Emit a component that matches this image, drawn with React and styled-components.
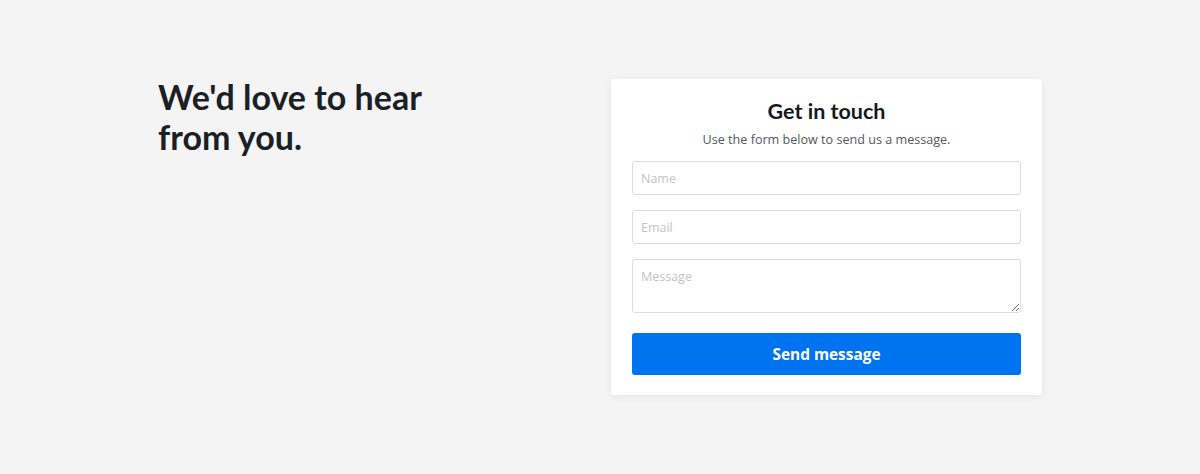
import React from "react";
import styled, { createGlobalStyle } from "styled-components";

const Global = createGlobalStyle`
  html, body { margin: 0; padding: 0; background: #f4f4f4; }
  body { font-family: "Open Sans", "Noto Sans", sans-serif; }
  * { box-sizing: border-box; }
`;

const Page = styled.div`
  min-height: 474px;
  padding-top: 79px;
`;

const Container = styled.div`
  width: 884px;
  margin: 0 auto;
  display: flex;
  justify-content: space-between;
  align-items: flex-start;
`;

const Heading = styled.h1`
  margin: -2px 0 0;
  font-family: "Lato", "Noto Sans", sans-serif;
  font-weight: 700;
  font-size: 34px;
  line-height: 40px;
  color: #1b1f27;
  width: 290px;
  letter-spacing: 0;
`;

const Card = styled.form`
  width: 431px;
  background: #fff;
  border-radius: 3px;
  box-shadow: 0 2px 8px rgba(0, 0, 0, 0.06);
  padding: 19px 21px 20px;
  display: flex;
  flex-direction: column;
`;

const Title = styled.h2`
  margin: 0;
  text-align: center;
  font-family: "Lato", "Noto Sans", sans-serif;
  font-weight: 700;
  font-size: 21.5px;
  line-height: 26px;
  color: #14171c;
`;

const Sub = styled.p`
  margin: 7px 0 12px;
  text-align: center;
  font-size: 12.6px;
  line-height: 18px;
  color: #55585d;
`;

const fieldStyles = `
  width: 100%;
  border: 1px solid #dcdcdc;
  border-radius: 3px;
  padding: 1px 8px 0;
  font-family: "Open Sans", sans-serif;
  font-size: 12.5px;
  color: #333;
  background: #fff;
  outline: none;
  &::placeholder { color: #c4c4c4; }
`;

const Input = styled.input`
  ${fieldStyles}
  height: 34px;
  margin-bottom: 15px;
`;

const TextArea = styled.textarea`
  ${fieldStyles}
  height: 54px;
  padding-top: 8px;
  resize: vertical;
  margin-bottom: 20px;
  display: block;
`;

const Button = styled.button`
  height: 42px;
  width: 100%;
  border: none;
  border-radius: 3px;
  background: #0073f0;
  color: #fff;
  font-family: "Open Sans", sans-serif;
  font-weight: 700;
  font-size: 15.4px;
  cursor: pointer;
`;

export default function App() {
  return (
    <>
      <Global />
      <Page>
        <Container>
          <Heading>We'd love to hear from you.</Heading>
          <Card onSubmit={(e) => e.preventDefault()}>
            <Title>Get in touch</Title>
            <Sub>Use the form below to send us a message.</Sub>
            <Input placeholder="Name" />
            <Input placeholder="Email" />
            <TextArea placeholder="Message" />
            <Button type="submit">Send message</Button>
          </Card>
        </Container>
      </Page>
    </>
  );
}
